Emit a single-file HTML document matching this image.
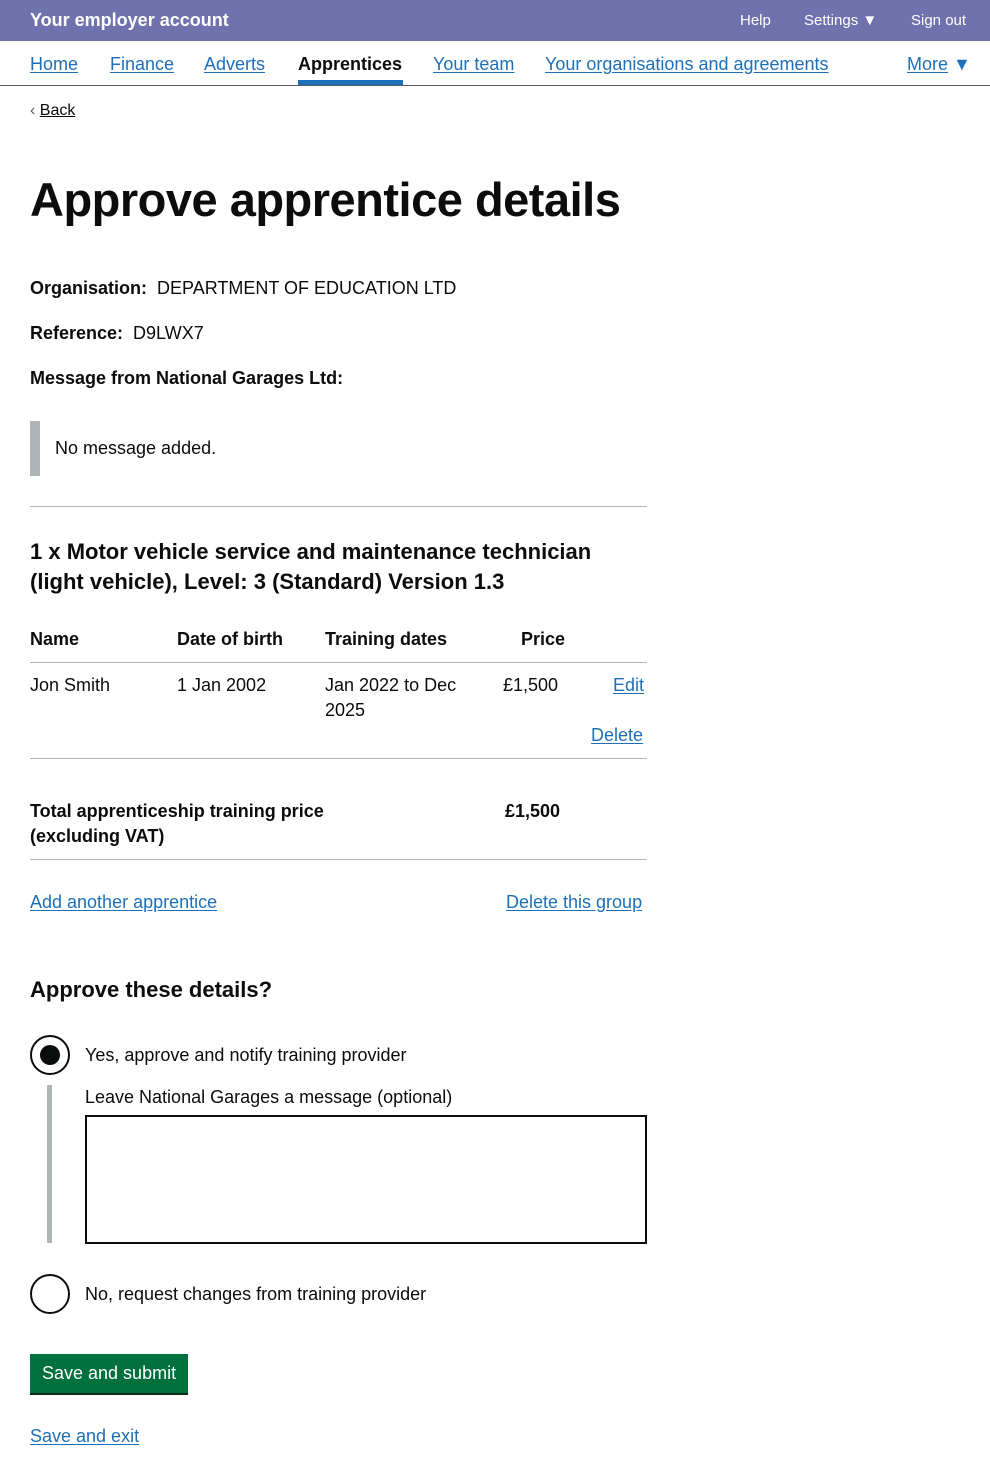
<!DOCTYPE html>
<html><head><meta charset="utf-8"><style>
*{margin:0;padding:0;box-sizing:border-box}
body{width:990px;height:1482px;position:relative;background:#fff;font-family:"Liberation Sans",Arial,sans-serif;color:#0b0c0c;overflow:hidden}
.t{position:absolute;white-space:nowrap;line-height:30px;height:30px;font-size:18px}
.b{font-weight:bold}
a,.l{color:#1d70b8;text-decoration:underline;text-underline-offset:2px}
.hr{position:absolute;left:30px;width:617px;height:1px;background:#b1b4b6}
</style></head><body>
<div style="position:absolute;left:0;top:0;width:990px;height:41px;background:#7072ae"></div>
<div class="t b" style="left:30px;top:5px;color:#fff;font-size:18px">Your employer account</div>
<div class="t" style="left:740px;top:6px;color:#fff;font-size:15px">Help</div>
<div class="t" style="left:804px;top:6px;color:#fff;font-size:15px">Settings ▼</div>
<div class="t" style="left:911px;top:6px;color:#fff;font-size:15px">Sign out</div>

<div class="t l" style="left:30px;top:49px">Home</div>
<div class="t l" style="left:110px;top:49px">Finance</div>
<div class="t l" style="left:204px;top:49px">Adverts</div>
<div class="t b" style="left:298px;top:49px">Apprentices</div>
<div style="position:absolute;left:298px;top:80px;width:105px;height:5px;background:#1d70b8"></div>
<div class="t l" style="left:433px;top:49px">Your team</div>
<div class="t l" style="left:545px;top:49px">Your organisations and agreements</div>
<div class="t" style="left:907px;top:49px;color:#1d70b8"><span class="l">More</span> ▼</div>
<div style="position:absolute;left:0;top:85px;width:990px;height:1px;background:#505a5f"></div>

<div class="t" style="left:30px;top:96px;font-size:16px"><span style="color:#505a5f">‹</span> <span style="text-decoration:underline">Back</span></div>

<div class="t b" style="left:30px;top:175px;font-size:47px;height:50px;line-height:50px;letter-spacing:-0.5px">Approve apprentice details</div>

<div class="t" style="left:30px;top:273px"><b>Organisation:</b>&nbsp; DEPARTMENT OF EDUCATION LTD</div>
<div class="t" style="left:30px;top:318px"><b>Reference:</b>&nbsp; D9LWX7</div>
<div class="t b" style="left:30px;top:363px">Message from National Garages Ltd:</div>
<div style="position:absolute;left:30px;top:421px;width:10px;height:55px;background:#b1b4b6"></div>
<div class="t" style="left:55px;top:433px">No message added.</div>
<div class="hr" style="top:506px"></div>

<div class="t b" style="left:30px;top:537px;font-size:22px">1 x Motor vehicle service and maintenance technician</div>
<div class="t b" style="left:30px;top:567px;font-size:22px">(light vehicle), Level: 3 (Standard) Version 1.3</div>

<div class="t b" style="left:30px;top:624px">Name</div>
<div class="t b" style="left:177px;top:624px">Date of birth</div>
<div class="t b" style="left:325px;top:624px">Training dates</div>
<div class="t b" style="left:521px;top:624px">Price</div>
<div class="hr" style="top:662px"></div>
<div class="t" style="left:30px;top:670px">Jon Smith</div>
<div class="t" style="left:177px;top:670px">1 Jan 2002</div>
<div class="t" style="left:325px;top:670px">Jan 2022 to Dec</div>
<div class="t" style="left:325px;top:695px">2025</div>
<div class="t" style="left:503px;top:670px">£1,500</div>
<div class="t l" style="left:613px;top:670px">Edit</div>
<div class="t l" style="left:591px;top:720px">Delete</div>
<div class="hr" style="top:758px"></div>
<div class="t b" style="left:30px;top:796px">Total apprenticeship training price</div>
<div class="t b" style="left:30px;top:821px">(excluding VAT)</div>
<div class="t b" style="left:505px;top:796px">£1,500</div>
<div class="hr" style="top:859px"></div>
<div class="t l" style="left:30px;top:887px">Add another apprentice</div>
<div class="t l" style="left:506px;top:887px">Delete this group</div>

<div class="t b" style="left:30px;top:975px;font-size:22px">Approve these details?</div>

<div style="position:absolute;left:30px;top:1035px;width:40px;height:40px;border:2px solid #0b0c0c;border-radius:50%"></div>
<div style="position:absolute;left:40px;top:1045px;width:20px;height:20px;background:#0b0c0c;border-radius:50%"></div>
<div class="t" style="left:85px;top:1040px">Yes, approve and notify training provider</div>
<div style="position:absolute;left:47px;top:1085px;width:5px;height:158px;background:#b1b4b6"></div>
<div class="t" style="left:85px;top:1082px">Leave National Garages a message (optional)</div>
<div style="position:absolute;left:85px;top:1115px;width:562px;height:129px;border:2px solid #0b0c0c"></div>

<div style="position:absolute;left:30px;top:1274px;width:40px;height:40px;border:2px solid #0b0c0c;border-radius:50%"></div>
<div class="t" style="left:85px;top:1279px">No, request changes from training provider</div>

<div style="position:absolute;left:30px;top:1354px;width:158px;height:39px;background:#00703c;box-shadow:0 2px 0 #002d18"></div>
<div class="t" style="left:42px;top:1358px;color:#fff">Save and submit</div>
<div class="t l" style="left:30px;top:1421px">Save and exit</div>
</body></html>
